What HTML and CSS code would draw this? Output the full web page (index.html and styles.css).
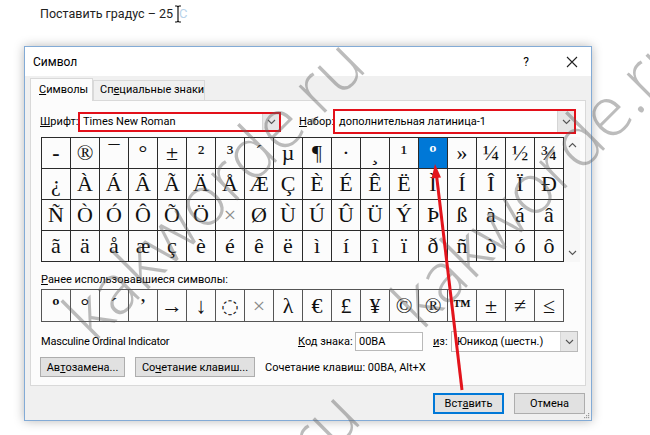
FILE: index.html
```html
<!DOCTYPE html>
<html lang="ru">
<head>
<meta charset="utf-8">
<title>Символ</title>
<link rel="stylesheet" href="styles.css">
</head>
<body>
<div class="doc-line">Поставить градус – 25<svg class="ibeam" width="8" height="18" viewBox="0 0 8 18"><path d="M1 1h2l1 1 1-1h2M4 2v14M1 17h2l1-1 1 1h2" fill="none" stroke="#111" stroke-width="1.2"/></svg><span class="ghost">C</span></div>

<div class="dialog">
  <div class="titlebar">
    <span class="title">Символ</span>
    <span class="help">?</span>
    <span class="close"><svg width="12" height="12" viewBox="0 0 12 12"><path d="M1 1L11 11M11 1L1 11" stroke="#222" stroke-width="1.1"/></svg></span>
  </div>
  <div class="dlg-body">
    <div class="tabs">
      <div class="tab active"><u>С</u>имволы</div>
      <div class="tab">Сп<u>е</u>циальные знаки</div>
    </div>
    <div class="panel">
      <div class="font-row">
        <span class="lbl lbl-font"><u>Ш</u>рифт:</span>
        <div class="hl hl-font">
          <div class="combo"><span class="combo-text">Times New Roman</span><span class="drop"><svg width="9" height="6" viewBox="0 0 9 6"><path d="M1 1l3.5 3.5L8 1" fill="none" stroke="#555" stroke-width="1.1"/></svg></span></div>
        </div>
        <span class="lbl lbl-set"><u>Н</u>абор:</span>
        <div class="hl hl-set">
          <div class="combo"><span class="combo-text">дополнительная латиница-1</span><span class="drop"><svg width="9" height="6" viewBox="0 0 9 6"><path d="M1 1l3.5 3.5L8 1" fill="none" stroke="#555" stroke-width="1.1"/></svg></span></div>
        </div>
      </div>

      <div class="grid-wrap">
        <div class="grid">
          <span class="c dash">-</span><span class="c">®</span><span class="c">¯</span><span class="c">°</span><span class="c">±</span><span class="c">²</span><span class="c">³</span><span class="c">´</span><span class="c">µ</span><span class="c">¶</span><span class="c">·</span><span class="c">¸</span><span class="c">¹</span><span class="c sel">º</span><span class="c">»</span><span class="c">¼</span><span class="c">½</span><span class="c">¾</span>
          <span class="c">¿</span><span class="c">À</span><span class="c">Á</span><span class="c">Â</span><span class="c">Ã</span><span class="c">Ä</span><span class="c">Å</span><span class="c">Æ</span><span class="c">Ç</span><span class="c">È</span><span class="c">É</span><span class="c">Ê</span><span class="c">Ë</span><span class="c">Ì</span><span class="c">Í</span><span class="c">Î</span><span class="c">Ï</span><span class="c">Ð</span>
          <span class="c">Ñ</span><span class="c">Ò</span><span class="c">Ó</span><span class="c">Ô</span><span class="c">Õ</span><span class="c">Ö</span><span class="c grey">×</span><span class="c">Ø</span><span class="c">Ù</span><span class="c">Ú</span><span class="c">Û</span><span class="c">Ü</span><span class="c">Ý</span><span class="c">Þ</span><span class="c">ß</span><span class="c">à</span><span class="c">á</span><span class="c">â</span>
          <span class="c">ã</span><span class="c">ä</span><span class="c">å</span><span class="c">æ</span><span class="c">ç</span><span class="c">è</span><span class="c">é</span><span class="c">ê</span><span class="c">ë</span><span class="c">ì</span><span class="c">í</span><span class="c">î</span><span class="c">ï</span><span class="c">ð</span><span class="c">ñ</span><span class="c">ò</span><span class="c">ó</span><span class="c">ô</span>
        </div>
        <div class="scroll">
          <svg width="9" height="6" viewBox="0 0 9 6"><path d="M1 5l3.5-3.5L8 5" fill="none" stroke="#555" stroke-width="1.1"/></svg>
          <svg width="9" height="6" viewBox="0 0 9 6"><path d="M1 1l3.5 3.5L8 1" fill="none" stroke="#555" stroke-width="1.1"/></svg>
        </div>
      </div>

      <div class="recent-label"><u>Р</u>анее использовавшиеся символы:</div>
      <div class="recent">
        <span class="c bold">º</span><span class="c">°</span><span class="c">´</span><span class="c">’</span><span class="c">→</span><span class="c">↓</span><span class="c dots">◌</span><span class="c grey">×</span><span class="c">λ</span><span class="c">€</span><span class="c">£</span><span class="c">¥</span><span class="c">©</span><span class="c">®</span><span class="c bold tm">™</span><span class="c">±</span><span class="c">≠</span><span class="c">≤</span>
      </div>

      <div class="info-row">
        <span class="desc">Masculine Ordinal Indicator</span>
        <span class="lbl lbl-code"><u>К</u>од знака:</span>
        <span class="field">00BA</span>
        <span class="lbl lbl-from"><u>и</u>з:</span>
        <div class="combo from-combo"><span class="combo-text">Юникод (шестн.)</span><span class="drop"><svg width="9" height="6" viewBox="0 0 9 6"><path d="M1 1l3.5 3.5L8 1" fill="none" stroke="#555" stroke-width="1.1"/></svg></span></div>
      </div>

      <div class="btn-row">
        <span class="btn btn-auto">Ав<u>т</u>озамена...</span>
        <span class="btn btn-keys">Со<u>ч</u>етание клавиш...</span>
        <span class="keys-text">Сочетание клавиш: 00BA, Alt+X</span>
      </div>
    </div>
    <div class="footer">
      <span class="btn btn-insert">Вст<u>а</u>вить</span>
      <span class="btn btn-cancel">Отмена</span>
      <svg class="grip" width="7" height="7" viewBox="0 0 7 7"><g fill="#9a9a9a"><rect x="5" y="1" width="1.2" height="1.2"/><rect x="3" y="3" width="1.2" height="1.2"/><rect x="5" y="3" width="1.2" height="1.2"/><rect x="1" y="5" width="1.2" height="1.2"/><rect x="3" y="5" width="1.2" height="1.2"/><rect x="5" y="5" width="1.2" height="1.2"/></g></svg>
    </div>
  </div>
</div>

<div class="wm-layer">
  <div class="wm wm1">kakworde.ru</div>
  <div class="wm wm2">kakworde.ru</div>
  <div class="wm wm3">kakworde.ru</div>
</div>

<svg class="arrow" width="650" height="435" viewBox="0 0 650 435">
  <line x1="462" y1="390" x2="436.6" y2="176" stroke="#e3141c" stroke-width="3"/>
  <polygon points="435,164 441,177.5 431.5,178.5" fill="#e3141c"/>
</svg>
</body>
</html>
```

FILE: styles.css
```css
* { box-sizing: border-box; }
html, body { margin: 0; padding: 0; background: #fff; }
body {
  width: 650px;
  height: 435px;
  overflow: hidden;
  position: relative;
  font-family: Roboto, "Noto Sans", sans-serif;
  font-size: 11px;
  color: #000;
}
u { text-decoration: underline; text-underline-offset: 1px; }

.doc-line {
  height: 46px;
  padding: 4px 0 0 40px;
  line-height: 20px;
  font-size: 12.5px;
  display: flex;
  align-items: flex-start;
  color: #222;
}
.ibeam { margin: 1px 0 0 1px; }
.ghost { color: #b9d3ea; margin-left: -3px; font-size: 13px; }

.dialog {
  margin-left: 24px;
  width: 568px;
  height: 375px;
  border: 1px solid #83abd6;
  background: #f0f0f0;
  box-shadow: 0 0 10px rgba(0, 0, 0, 0.28);
  display: flex;
  flex-direction: column;
}
.titlebar {
  height: 29px;
  background: #fff;
  display: flex;
  align-items: center;
  padding-left: 8px;
  font-size: 12px;
}
.title { flex: 1; }
.help { width: 30px; text-align: center; font-size: 12px; margin-right: 12px; }
.close { width: 38px; display: flex; justify-content: center; }

.dlg-body {
  flex: 1;
  padding: 2px 5px 0 5px;
  display: flex;
  flex-direction: column;
}
.tabs { display: flex; align-items: flex-end; height: 22px; }
.tab {
  height: 20px;
  line-height: 18px;
  padding: 0 6px;
  border: 1px solid #d9d9d9;
  border-bottom: none;
  background: #f0f0f0;
  width: 112px;
  white-space: nowrap;
}
.tab.active {
  width: 63px;
  height: 23px;
  line-height: 21px;
  padding-left: 8px;
  background: #fcfcfc;
  margin-bottom: -1px;
  position: relative;
  z-index: 1;
}
.panel {
  height: 286px;
  border: 1px solid #d9d9d9;
  background: #fcfcfc;
  padding: 8px 0 0 10px;
  display: flex;
  flex-direction: column;
}

.font-row { display: flex; align-items: center; height: 25px; }
.lbl { white-space: nowrap; }
.lbl-font { width: 38px; margin-left: -1px; }
.lbl-set { width: 34px; margin-left: 18px; }
.hl { border: 2px solid #e3101a; background: #fff; display: flex; }
.hl-font { width: 203px; height: 20px; }
.hl-set { width: 243px; height: 25px; }
.combo {
  flex: 1;
  display: flex;
  align-items: stretch;
  background: #fff;
}
.combo-text { flex: 1; padding-left: 3px; display: flex; align-items: center; white-space: nowrap; }
.drop {
  width: 17px;
  background: #e6e6e6;
  display: flex;
  align-items: center;
  justify-content: center;
  border-left: 1px solid #d5d5d5;
}
.hl-set .combo-text { padding-left: 4px; }

.grid-wrap { display: flex; margin-top: 3px; height: 125px; }
.grid {
  display: grid;
  grid-template-columns: repeat(18, 29px);
  grid-auto-rows: 31px;
  border-left: 1px solid #2a2a2a;
  border-top: 1px solid #2a2a2a;
  width: 523px;
}
.c {
  border-right: 1px solid #2a2a2a;
  border-bottom: 1px solid #2a2a2a;
  font-family: "Liberation Serif", "DejaVu Serif", serif;
  font-size: 22px;
  line-height: 30px;
  text-align: center;
  color: #111;
  overflow: hidden;
}
.c.dash { font-weight: bold; }
.c.sel { background: #0078d7; color: #fff; font-weight: bold; }
.c.grey { color: #8a8a8a; }
.scroll {
  width: 16px;
  background: #f7f7f7;
  display: flex;
  flex-direction: column;
  justify-content: space-between;
  align-items: center;
  padding: 5px 0 6px;
}

.recent-label { margin-top: 10px; height: 16px; line-height: 16px; }
.recent {
  margin-top: 1px;
  display: grid;
  grid-template-columns: repeat(18, 29px);
  grid-auto-rows: 32px;
  border-left: 1px solid #555;
  border-top: 1px solid #555;
  width: 523px;
}
.recent .c { border-color: #555; line-height: 32px; }
.recent .c.bold { font-weight: bold; }
.recent .c.tm { font-size: 18px; }
.recent .c.dots { font-family: "DejaVu Sans", sans-serif; font-size: 20px; }

.info-row { margin-top: 9px; height: 21px; display: flex; align-items: center; }
.desc { width: 257px; white-space: nowrap; letter-spacing: -0.2px; }
.lbl-code { width: 57px; }
.field {
  width: 68px;
  height: 19px;
  border: 1px solid #b9b9b9;
  background: #fff;
  padding-left: 3px;
  line-height: 17px;
}
.lbl-from { width: 18px; margin-left: 10px; }
.from-combo {
  flex: 0 0 127px;
  height: 21px;
  border: 1px solid #b9b9b9;
}
.from-combo .combo-text { padding-left: 5px; }

.btn-row { margin-top: 5px; height: 20px; display: flex; align-items: center; }
.btn {
  height: 20px;
  border: 1px solid #adadad;
  background: #e1e1e1;
  display: flex;
  align-items: center;
  justify-content: center;
  white-space: nowrap;
}
.btn-auto { width: 85px; margin-left: -1px; }
.btn-keys { width: 120px; margin-left: 10px; }
.keys-text { margin-left: 10px; white-space: nowrap; }

.footer {
  flex: 1;
  display: flex;
  justify-content: flex-end;
  align-items: flex-start;
  padding: 7px 1px 0 0;
  position: relative;
}
.btn-insert { width: 71px; height: 21px; border: 1px solid #0078d7; box-shadow: inset 0 0 0 1px #0078d7; }
.btn-cancel { width: 71px; height: 21px; margin-left: 10px; }
.grip { position: absolute; right: -4px; bottom: 1px; }

.wm-layer {
  position: absolute;
  left: 0;
  top: 0;
  width: 650px;
  height: 435px;
  overflow: hidden;
  pointer-events: none;
}
.wm {
  position: absolute;
  left: 0;
  top: 0;
  font-family: "Open Sans", sans-serif;
  font-weight: 300;
  font-size: 70px;
  line-height: 1;
  color: rgba(95, 95, 95, 0.42);
  white-space: nowrap;
  transform-origin: 0 0;
}
.wm1 { transform: translate(50px, 300px) rotate(-45deg); }
.wm2 { transform: translate(378px, 288px) rotate(-45deg); }
.wm3 { transform: translate(45px, 652px) rotate(-45deg); }

.arrow { position: absolute; left: 0; top: 0; pointer-events: none; }
```
